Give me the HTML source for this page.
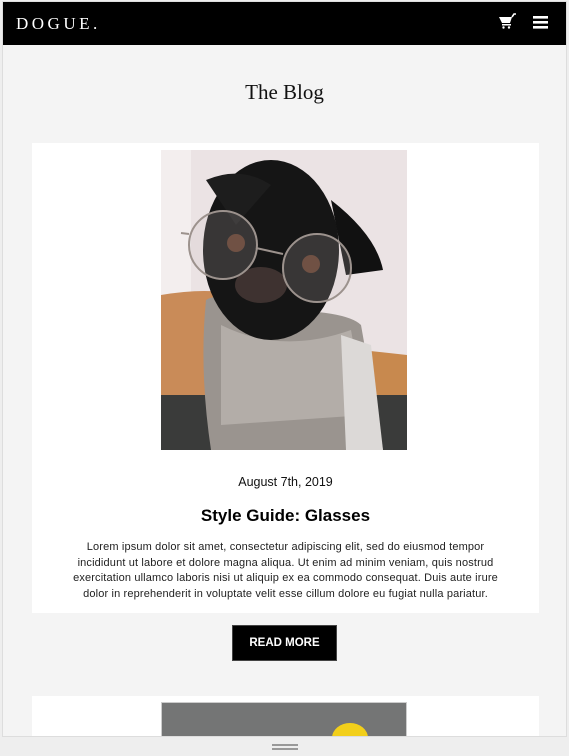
<!DOCTYPE html>
<html><head><meta charset="utf-8"><style>
*{margin:0;padding:0;box-sizing:border-box}
body{width:569px;height:756px;background:#eeeeee;position:relative;overflow:hidden;font-family:"Liberation Sans",sans-serif}
.frame{position:absolute;left:2px;top:1px;width:565px;height:736px;background:#f4f4f4;border:1px solid #ddd;overflow:hidden}
.hdr{position:absolute;left:0;top:0;width:565px;height:43px;background:#000}
.logo{position:absolute;left:13px;top:12px;color:#fff;font-family:"Liberation Serif",serif;font-size:17px;letter-spacing:3.5px}
h1{position:absolute;top:78px;left:0;width:100%;text-align:center;font-family:"Liberation Serif",serif;font-weight:normal;font-size:21px;color:#111}
.card{position:absolute;left:29px;top:141px;width:507px;height:470px;background:#fff}
.pic{position:absolute;left:129px;top:7px;width:246px;height:300px}
.date{position:absolute;top:332px;width:100%;text-align:center;font-size:12.5px;color:#111}
.t{position:absolute;top:363px;width:100%;text-align:center;font-size:17px;font-weight:bold;color:#000}
.p{position:absolute;top:397px;left:34px;right:34px;text-align:center;font-size:11px;letter-spacing:.15px;line-height:15.7px;color:#222}
.btn{position:absolute;left:229px;top:623px;width:105px;height:36px;background:#000;border:1px solid #444;color:#fff;font-size:11.5px;font-weight:bold;text-align:center;line-height:34px}
.card2{position:absolute;left:29px;top:694px;width:507px;height:60px;background:#fff}
.pic2{position:absolute;left:129px;top:6px;width:246px;height:40px;background:#747575;border:1px solid #ccc}
.handle{position:absolute;left:272px;top:744px;width:26px;height:2px;background:#999;box-shadow:0 4px 0 #999}
</style></head><body>
<div class="frame">
 <div class="hdr">
  <div class="logo">DOGUE.</div>
  <svg style="position:absolute;left:495px;top:11px" width="20" height="18" viewBox="0 0 20 18"><path d="M1 4h13l-2 6H4z" fill="#fff"/><path d="M14 4l2-3h2" stroke="#fff" stroke-width="1.6" fill="none"/><rect x="4" y="11" width="9" height="1.5" fill="#fff"/><circle cx="5.5" cy="14.5" r="1.2" fill="#fff"/><circle cx="11" cy="14.5" r="1.2" fill="#fff"/></svg>
  <svg style="position:absolute;left:530px;top:13px" width="15" height="15" viewBox="0 0 15 15"><rect y="1" width="15" height="2.6" fill="#fff"/><rect y="6" width="15" height="2.6" fill="#fff"/><rect y="11" width="15" height="2.6" fill="#fff"/></svg>
 </div>
 <h1>The Blog</h1>
 <div class="card">
  <svg class="pic" viewBox="0 0 246 300">
   <rect width="246" height="300" fill="#ebe3e4"/>
   <rect x="0" y="0" width="30" height="150" fill="#f3eeee"/>
   <path d="M0 145 Q60 135 90 150 L90 260 L0 260z" fill="#c98b58"/>
   <path d="M200 200 L246 205 L246 265 L200 265z" fill="#c8894e"/>
   <rect x="0" y="245" width="246" height="55" fill="#3a3b3a"/>
   <path d="M45 150 Q60 140 110 160 Q185 160 200 175 L222 300 L50 300 Q38 220 45 150z" fill="#9a948f"/>
   <path d="M60 175 Q120 205 190 180 L205 265 L60 275z" fill="#b3ada8"/>
   <path d="M180 185 L210 195 L222 300 L185 300z" fill="#dcd9d7"/>
   <ellipse cx="110" cy="100" rx="68" ry="90" fill="#151515"/>
   <path d="M45 30 Q80 15 110 35 L75 75z" fill="#1d1d1d"/>
   <path d="M170 50 Q215 85 222 120 L185 125z" fill="#111"/>
   <ellipse cx="100" cy="135" rx="26" ry="18" fill="#3e3230"/>
   <circle cx="75" cy="93" r="9" fill="#5a3626"/><circle cx="150" cy="114" r="9" fill="#5a3626"/>
   <circle cx="62" cy="95" r="34" fill="#c9c0bd" fill-opacity=".2" stroke="#9c928d" stroke-width="2"/>
   <circle cx="156" cy="118" r="34" fill="#c9c0bd" fill-opacity=".2" stroke="#9c928d" stroke-width="2"/>
   <path d="M95 98 L122 104 M28 84 L20 83" stroke="#9c928d" stroke-width="2"/>
  </svg>
  <div class="date">August 7th, 2019</div>
  <div class="t">Style Guide: Glasses</div>
  <div class="p">Lorem ipsum dolor sit amet, consectetur adipiscing elit, sed do eiusmod tempor incididunt ut labore et dolore magna aliqua. Ut enim ad minim veniam, quis nostrud exercitation ullamco laboris nisi ut aliquip ex ea commodo consequat. Duis aute irure dolor in reprehenderit in voluptate velit esse cillum dolore eu fugiat nulla pariatur.</div>
 </div>
 <div class="btn">READ MORE</div>
 <div class="card2"><div class="pic2"><div style="position:absolute;left:170px;top:20px;width:36px;height:30px;border-radius:50%;background:#f2cf1a"></div></div></div>
</div>
<div class="handle"></div>
</body></html>
